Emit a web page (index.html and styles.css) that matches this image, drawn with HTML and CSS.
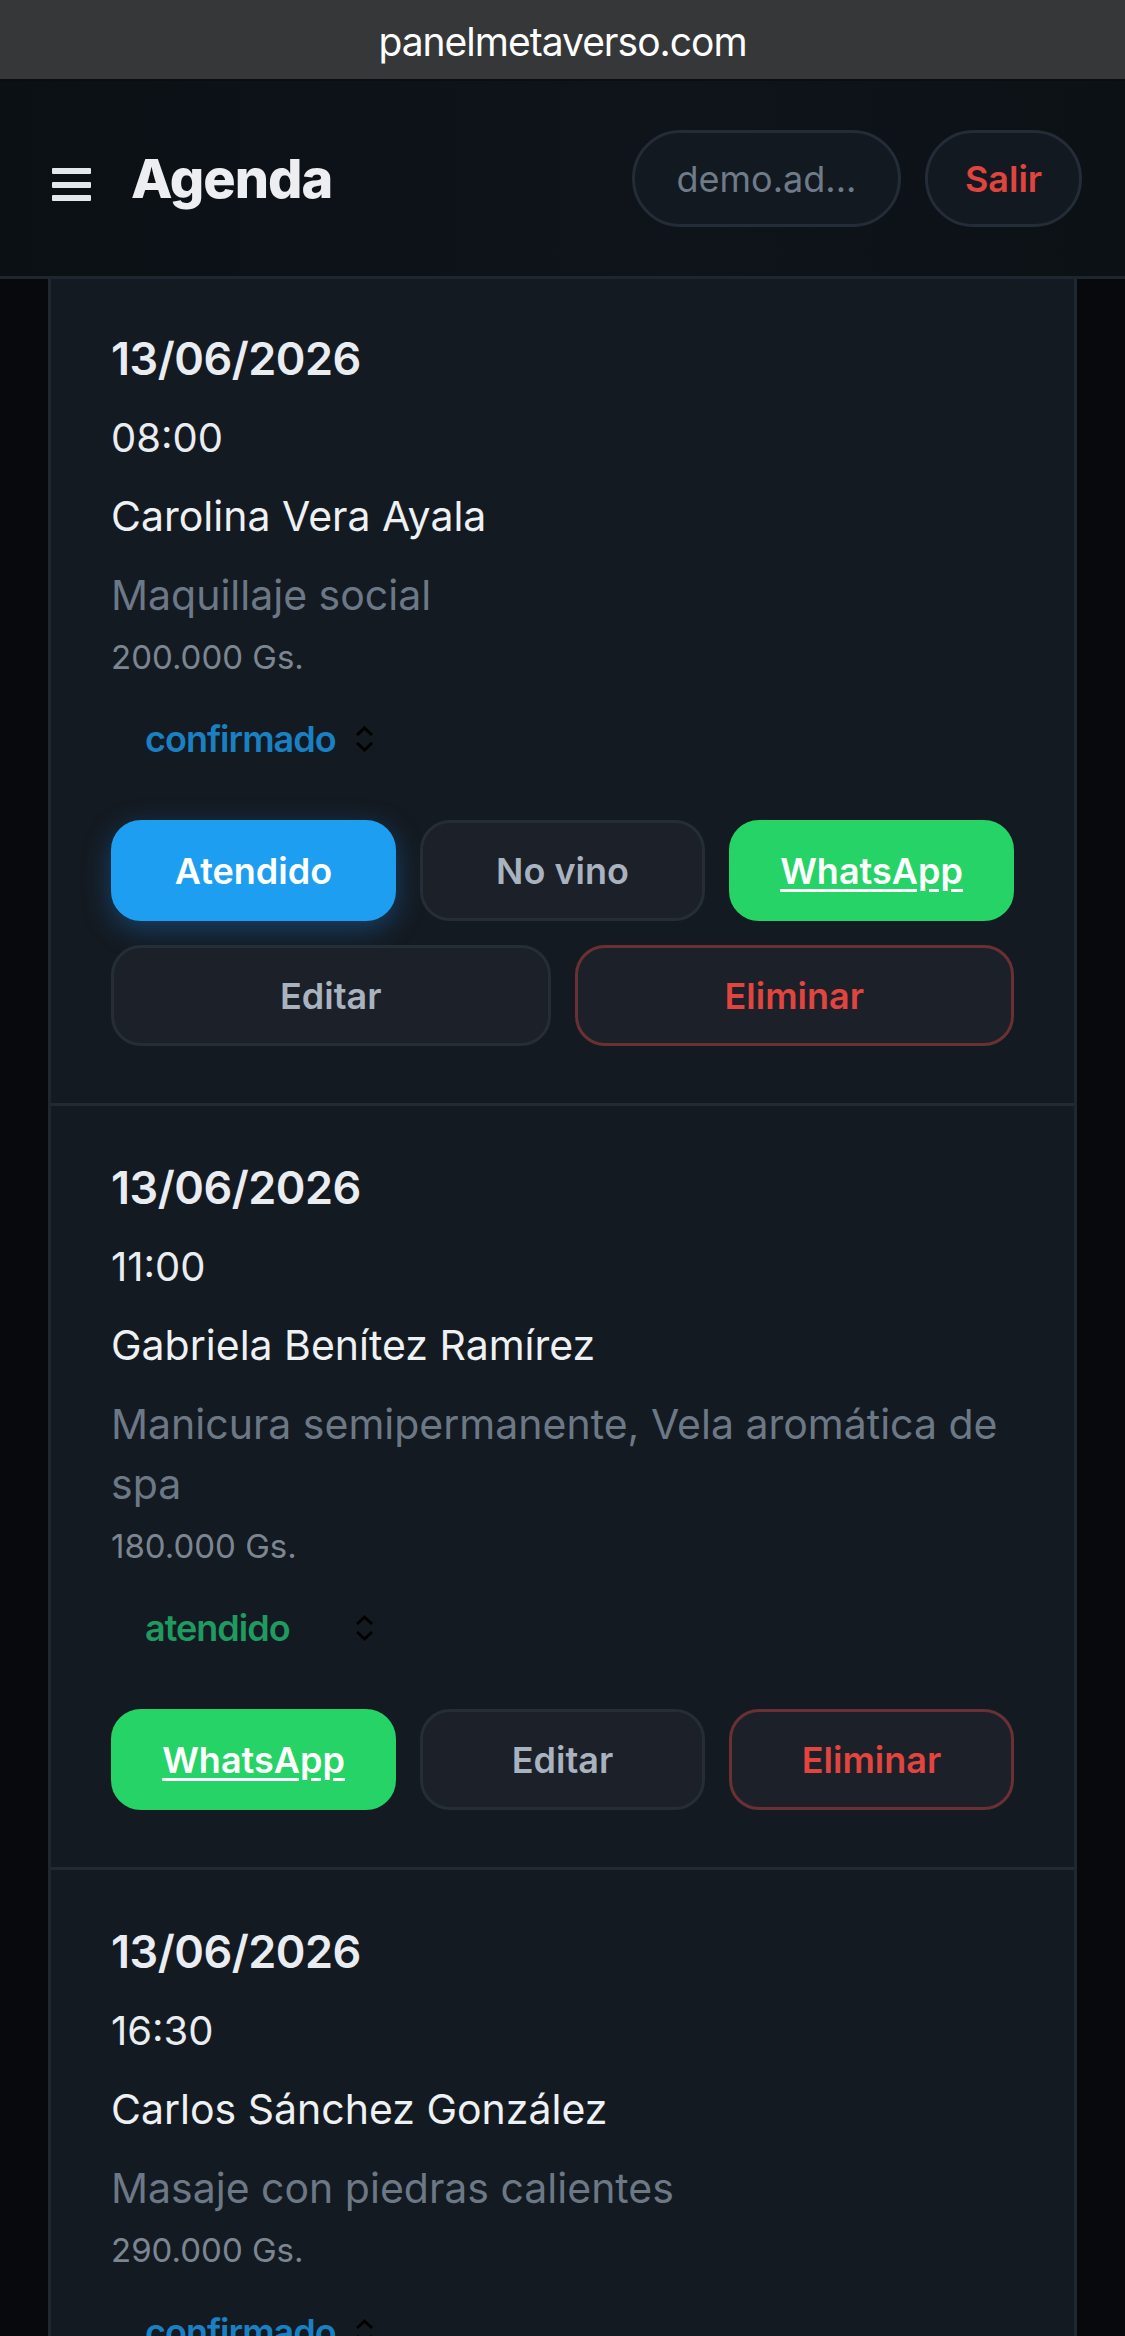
FILE: index.html
```
<!DOCTYPE html>
<html lang="es">
<head>
  <meta charset="UTF-8" />
  <meta name="viewport" content="width=device-width, initial-scale=1.0"/>
  <title>Agenda</title>
  <link rel="stylesheet" href="styles.css">
</head>
<body>

<div class="urlbar">panelmetaverso.com</div>

<!-- TOP BAR -->
<header class="topbar">
  <div class="topbar-left">
    <span class="burger"><span></span><span></span><span></span></span>
    <h1>Agenda</h1>
  </div>
  <div class="topbar-right">
    <span class="pill user-pill">demo.ad...</span>
    <button class="pill logout-pill">Salir</button>
  </div>
</header>

<!-- APPOINTMENTS -->
<main class="container">
  <div class="list">

    <div class="appt">
      <div class="date">13/06/2026</div>
      <div class="time">08:00</div>
      <div class="client">Carolina Vera Ayala</div>
      <div class="service">Maquillaje social</div>
      <div class="price">200.000 Gs.</div>
      <div class="status confirmado">
        <span>confirmado</span>
        <svg width="21" height="28" viewBox="0 0 21 28"><path d="M3 10 L10.5 3 L18 10 M3 18 L10.5 25 L18 18" fill="none" stroke="#000" stroke-width="3"/></svg>
      </div>
      <div class="actions">
        <button class="btn btn-primary">Atendido</button>
        <button class="btn">No vino</button>
        <a class="btn btn-wa" href="#">WhatsApp</a>
        <button class="btn">Editar</button>
        <button class="btn btn-danger">Eliminar</button>
      </div>
    </div>

    <div class="appt">
      <div class="date">13/06/2026</div>
      <div class="time">11:00</div>
      <div class="client">Gabriela Benítez Ramírez</div>
      <div class="service">Manicura semipermanente, Vela aromática de spa</div>
      <div class="price">180.000 Gs.</div>
      <div class="status atendido">
        <span>atendido</span>
        <svg width="21" height="28" viewBox="0 0 21 28"><path d="M3 10 L10.5 3 L18 10 M3 18 L10.5 25 L18 18" fill="none" stroke="#000" stroke-width="3"/></svg>
      </div>
      <div class="actions">
        <a class="btn btn-wa" href="#">WhatsApp</a>
        <button class="btn">Editar</button>
        <button class="btn btn-danger">Eliminar</button>
      </div>
    </div>

    <div class="appt">
      <div class="date">13/06/2026</div>
      <div class="time">16:30</div>
      <div class="client">Carlos Sánchez González</div>
      <div class="service">Masaje con piedras calientes</div>
      <div class="price">290.000 Gs.</div>
      <div class="status confirmado">
        <span>confirmado</span>
        <svg width="21" height="28" viewBox="0 0 21 28"><path d="M3 10 L10.5 3 L18 10 M3 18 L10.5 25 L18 18" fill="none" stroke="#000" stroke-width="3"/></svg>
      </div>
      <div class="actions">
        <button class="btn btn-primary">Atendido</button>
        <button class="btn">No vino</button>
        <a class="btn btn-wa" href="#">WhatsApp</a>
        <button class="btn">Editar</button>
        <button class="btn btn-danger">Eliminar</button>
      </div>
    </div>

  </div>
</main>

</body>
</html>
```

FILE: styles.css
```
body {
  margin: 0;
  height: 2336px;
  overflow: hidden;
  background: #07090c;
  font-family: Inter, "Noto Sans", sans-serif;
  color: #e9edf1;
}

.urlbar {
  height: 81px;
  box-sizing: border-box;
  padding-top: 4px;
  background: #353739;
  border-bottom: 2px solid #0b0d0f;
  color: #fff;
  font-size: 39px;
  letter-spacing: -1px;
  display: flex;
  align-items: center;
  justify-content: center;
}

.topbar {
  height: 195px;
  padding: 0 43px 0 52px;
  background: linear-gradient(90deg, #0b1015, #0e141a 60%, #0c1116);
  border-bottom: 3px solid #1e2630;
  display: flex;
  align-items: center;
  justify-content: space-between;
}

.topbar-left {
  display: flex;
  align-items: center;
}

.burger {
  width: 39px;
  height: 33px;
  margin: 12px 40px 0 0;
  display: flex;
  flex-direction: column;
  justify-content: space-between;
}

.burger span {
  height: 6px;
  background: #e4e7eb;
  border-radius: 1px;
}

h1 {
  margin: 0;
  font-size: 54px;
  font-weight: 800;
  letter-spacing: -1px;
  color: #eceef1;
}

.topbar-right {
  display: flex;
  gap: 24px;
}

.pill {
  height: 97px;
  box-sizing: border-box;
  border: 3px solid #232c37;
  background: #131920;
  border-radius: 50px;
  font-family: inherit;
  font-size: 36px;
  display: flex;
  align-items: center;
  justify-content: center;
}

.user-pill {
  width: 269px;
  color: #6f7b88;
}

.logout-pill {
  width: 157px;
  color: #e0443e;
  font-weight: 600;
}

.container {
  padding: 0 48px;
}

.list {
  background: #141a21;
  border-left: 3px solid #1f2731;
  border-right: 3px solid #1f2731;
}

.appt {
  padding: 52px 60px 57px;
  border-bottom: 3px solid #222a34;
}

.appt:first-child {
  padding-top: 50px;
}

.date {
  font-size: 45px;
  font-weight: 600;
  letter-spacing: -0.5px;
  line-height: 60px;
  margin-bottom: 19px;
}

.time,
.client,
.service {
  font-size: 41px;
  line-height: 60px;
}

.time {
  font-size: 40px;
  margin-bottom: 18px;
}

.client {
  color: #eef1f4;
  margin-bottom: 19px;
}

.service {
  color: #6c7886;
  margin-bottom: 10px;
}

.price {
  font-size: 33px;
  line-height: 44px;
  color: #7c8692;
  margin-bottom: 20px;
}

.status {
  width: 290px;
  height: 80px;
  box-sizing: border-box;
  padding: 0 26px 0 34px;
  margin-bottom: 41px;
  display: flex;
  align-items: center;
  justify-content: space-between;
  font-size: 36px;
  font-weight: 600;
  letter-spacing: -1px;
}

.status.confirmado {
  color: #1a80c4;
}

.status.atendido {
  color: #1f9a60;
}

.actions {
  display: flex;
  flex-wrap: wrap;
  gap: 24px;
}

.btn {
  flex: 1 1 250px;
  height: 101px;
  box-sizing: border-box;
  border: 3px solid #252d37;
  border-radius: 30px;
  background: #1b2029;
  color: #a9b3bf;
  font-family: inherit;
  font-size: 36px;
  font-weight: 600;
  display: flex;
  align-items: center;
  justify-content: center;
  text-decoration: none;
  cursor: pointer;
}

.btn-primary {
  background: #1d9ef0;
  border-color: #1d9ef0;
  color: #fff;
  box-shadow: 0 8px 28px rgba(29, 140, 240, 0.35);
}

.btn-wa {
  background: #25d366;
  border-color: #25d366;
  color: #fff;
  text-decoration: underline;
  text-underline-offset: 5px;
}

.btn-danger {
  border-color: #6a3033;
  color: #e2443f;
}
```
